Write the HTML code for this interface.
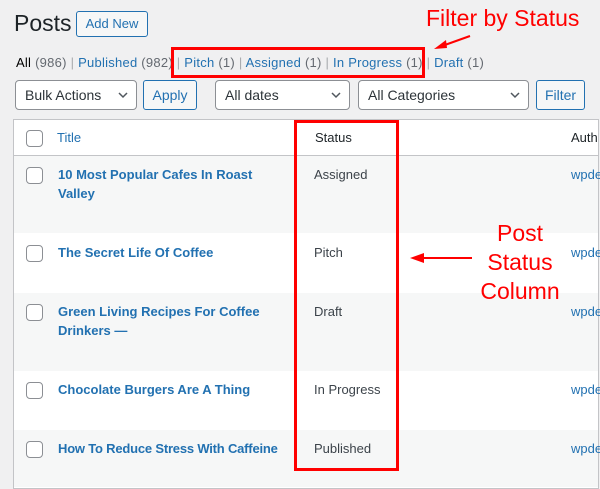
<!DOCTYPE html>
<html><head><style>
body{margin:0;width:600px;height:489px;background:#f0f0f1;font-family:"Liberation Sans",sans-serif;font-size:13px;color:#3c434a;position:relative;overflow:hidden}
.a{position:absolute;white-space:nowrap}
.lnk{color:#2271b1}
.btn{position:absolute;border:1px solid #2271b1;border-radius:3px;color:#2271b1;background:#f6f7f7;box-sizing:border-box;text-align:center;white-space:nowrap}
.sel{position:absolute;border:1px solid #8c8f94;border-radius:4px;background:#fff;box-sizing:border-box;padding-left:9px;color:#2c3338;font-size:14px;white-space:nowrap}
.sel svg{position:absolute;right:8px;top:11px}
.row{position:absolute;left:14px;width:584px}
.cb{position:absolute;left:26px;width:15px;height:15px;border:1px solid #8c8f94;border-radius:4px;background:#fff}
.t{position:absolute;left:58px;color:#2271b1;font-weight:bold;font-size:13px;line-height:19px}
.s{position:absolute;left:314px;font-size:13px}
.w{position:absolute;left:571px;color:#2271b1}
.red{color:#f00;font-size:23px;text-align:center;line-height:29px}
</style></head><body>
<div class="a" style="left:14px;top:10px;font-size:23px;color:#1d2327">Posts</div>
<div class="btn" style="left:76px;top:11px;width:72px;height:26px;line-height:24px;font-size:13px">Add New</div>
<div class="a" style="left:16px;top:55px;font-size:13px;letter-spacing:0.25px"><b style="color:#000;font-weight:normal">All</b> <span style="color:#646970">(986)</span> <span style="color:#a7aaad">|</span> <span class="lnk">Published <span style="color:#646970">(982)</span></span> <span style="color:#a7aaad">|</span> <span class="lnk">Pitch <span style="color:#646970">(1)</span></span> <span style="color:#a7aaad">|</span> <span class="lnk">Assigned <span style="color:#646970">(1)</span></span> <span style="color:#a7aaad">|</span> <span class="lnk">In Progress <span style="color:#646970">(1)</span></span> <span style="color:#a7aaad">|</span> <span class="lnk">Draft <span style="color:#646970">(1)</span></span></div>
<div class="sel" style="left:15px;top:80px;width:122px;height:30px;line-height:28px">Bulk Actions<svg width="10" height="7"><path d="M1 1l4 4 4-4" stroke="#50575e" stroke-width="1.5" fill="none"/></svg></div>
<div class="btn" style="left:143px;top:80px;width:54px;height:30px;line-height:28px;font-size:14px">Apply</div>
<div class="sel" style="left:215px;top:80px;width:135px;height:30px;line-height:28px">All dates<svg width="10" height="7"><path d="M1 1l4 4 4-4" stroke="#50575e" stroke-width="1.5" fill="none"/></svg></div>
<div class="sel" style="left:358px;top:80px;width:171px;height:30px;line-height:28px">All Categories<svg width="10" height="7"><path d="M1 1l4 4 4-4" stroke="#50575e" stroke-width="1.5" fill="none"/></svg></div>
<div class="btn" style="left:536px;top:80px;width:49px;height:30px;line-height:28px;font-size:14px">Filter</div>

<div style="position:absolute;left:13px;top:119px;width:584px;height:368px;border:1px solid #c3c4c7;background:#fff"></div>
<div class="row" style="top:120px;height:35px;background:#fff;border-bottom:1px solid #c3c4c7"></div>
<div class="row" style="top:156px;height:77px;background:#f6f7f7"></div>
<div class="row" style="top:293px;height:78px;background:#f6f7f7"></div>
<div class="row" style="top:430px;height:57px;background:#f6f7f7"></div>

<div class="cb" style="top:130px"></div>
<div class="a lnk" style="left:57px;top:130px;font-size:13px">Title</div>
<div class="a" style="left:315px;top:130px;color:#1d2327">Status</div>
<div class="a" style="left:571px;top:130px;color:#1d2327">Auth</div>

<div class="cb" style="top:167px"></div><div class="t" style="top:165px">10 Most Popular Cafes In Roast<br>Valley</div><div class="s a" style="top:167px">Assigned</div><div class="w a" style="top:167px">wpde</div>
<div class="cb" style="top:245px"></div><div class="t a" style="top:243px">The Secret Life Of Coffee</div><div class="s a" style="top:245px">Pitch</div><div class="w a" style="top:245px">wpde</div>
<div class="cb" style="top:304px"></div><div class="t" style="top:302px">Green Living Recipes For Coffee<br>Drinkers —</div><div class="s a" style="top:304px">Draft</div><div class="w a" style="top:304px">wpde</div>
<div class="cb" style="top:382px"></div><div class="t a" style="top:380px">Chocolate Burgers Are A Thing</div><div class="s a" style="top:382px">In Progress</div><div class="w a" style="top:382px">wpde</div>
<div class="cb" style="top:441px"></div><div class="t a" style="top:439px;letter-spacing:-0.2px">How To Reduce Stress With Caffeine</div><div class="s a" style="top:441px">Published</div><div class="w a" style="top:441px">wpde</div>

<div style="position:absolute;left:171px;top:47px;width:248px;height:25px;border:3px solid #f00"></div>
<div style="position:absolute;left:294px;top:120px;width:99px;height:345px;border:3px solid #f00"></div>
<div class="a red" style="left:426px;top:4px">Filter by Status</div>
<svg class="a" style="left:380px;top:30px" width="200" height="40">
<path d="M90 6L62 16" stroke="#f00" stroke-width="2"/><path d="M54 19l12-9 1 8z" fill="#f00"/>
</svg>
<svg class="a" style="left:408px;top:251px" width="70" height="14"><path d="M14 7H64" stroke="#f00" stroke-width="2"/><path d="M2 7l14-5v10z" fill="#f00"/></svg>
<div class="a red" style="left:476px;top:219px;width:88px">Post<br>Status<br>Column</div>
</body></html>
